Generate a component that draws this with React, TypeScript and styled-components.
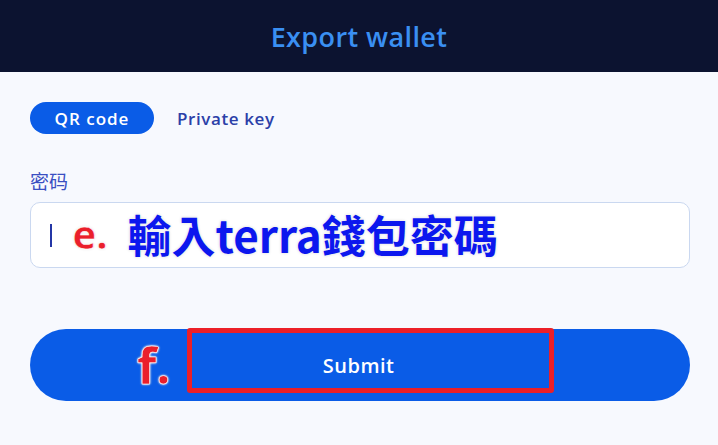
import React from "react";
import styled, { createGlobalStyle } from "styled-components";

const Global = createGlobalStyle`
  html, body { margin: 0; padding: 0; background: #f7f9fe; }
  body { font-family: "Open Sans", "Noto Sans", sans-serif; }
`;

const Page = styled.div`
  width: 718px;
  height: 445px;
  display: flex;
  flex-direction: column;
  background: #f7f9fe;
  overflow: hidden;
`;

const Header = styled.header`
  height: 72px;
  background: #0c1330;
  display: flex;
  align-items: center;
  justify-content: center;
`;

const Title = styled.h1`
  margin: 0;
  font-family: "Open Sans", sans-serif;
  font-weight: 600;
  font-size: 27px;
  color: #3a8ff2;
  letter-spacing: 0.4px;
`;

const Body = styled.main`
  display: flex;
  flex-direction: column;
  padding: 30px 28px 0 30px;
`;

const Tabs = styled.div`
  display: flex;
  align-items: center;
  gap: 23px;
`;

const Tab = styled.button<{ $active?: boolean }>`
  height: 32px;
  width: ${(p) => (p.$active ? "124px" : "auto")};
  padding: 0;
  border: none;
  border-radius: 16px;
  background: ${(p) => (p.$active ? "#0a5ce7" : "transparent")};
  color: ${(p) => (p.$active ? "#ffffff" : "#2b40a8")};
  font-family: "Open Sans", sans-serif;
  font-weight: 600;
  font-size: 17px;
  letter-spacing: ${(p) => (p.$active ? "1px" : "0.6px")};
  cursor: pointer;
`;

const Label = styled.label`
  margin-top: 34px;
  font-family: "Noto Sans CJK SC", sans-serif;
  font-size: 19px;
  color: #3a4fc2;
  line-height: 26px;
`;

const InputBox = styled.div`
  margin-top: 8px;
  height: 64px;
  border: 1px solid #cad8f0;
  border-radius: 10px;
  background: #ffffff;
  display: flex;
  align-items: center;
  padding-left: 19px;
`;

const Caret = styled.span`
  width: 1.5px;
  height: 23px;
  background: #2436a6;
`;

const RedNote = styled.span<{ $size: number }>`
  font-family: "Open Sans", "Liberation Sans", sans-serif;
  font-weight: 700;
  font-size: ${(p) => p.$size}px;
  color: #ea1f2b;
  text-shadow: 0 0 2px #fff, 0 0 2px #fff, 0 0 3px #ddd;
  -webkit-text-stroke: 0.5px #fff;
  line-height: 1;
`;

const BlueNote = styled.span`
  margin-left: 20px;
  font-family: "Noto Sans CJK TC", sans-serif;
  font-weight: 700;
  font-size: 44px;
  color: #0c17ee;
  text-shadow: 0 0 2px #fff, 0 0 3px #ccc;
  line-height: 1;
`;

const InputNote = styled.div`
  display: flex;
  align-items: center;
  margin-left: 21px;
  margin-top: -2px;
`;

const SubmitButton = styled.button`
  margin-top: 61px;
  height: 72px;
  border: none;
  border-radius: 36px;
  background: #0a5ce7;
  display: flex;
  align-items: center;
  padding: 0 0 0 107px;
  cursor: pointer;
`;

const Highlight = styled.span`
  align-self: flex-start;
  margin-left: 16px;
  margin-top: -1px;
  width: 334px;
  height: 45px;
  padding: 10px 23px 0 0;
  border: 5px solid #ec1f28;
  border-radius: 3px;
  display: flex;
  align-items: center;
  justify-content: center;
  color: #ffffff;
  font-family: "Open Sans", sans-serif;
  font-weight: 600;
  font-size: 20px;
  letter-spacing: 0.5px;
  box-sizing: content-box;
`;

export default function App() {
  return (
    <Page>
      <Global />
      <Header>
        <Title>Export wallet</Title>
      </Header>
      <Body>
        <Tabs>
          <Tab $active>QR code</Tab>
          <Tab>Private key</Tab>
        </Tabs>
        <Label>密码</Label>
        <InputBox>
          <Caret />
          <InputNote>
            <RedNote $size={40}>e.</RedNote>
            <BlueNote>輸入terra錢包密碼</BlueNote>
          </InputNote>
        </InputBox>
        <SubmitButton>
          <RedNote $size={50}>f.</RedNote>
          <Highlight>Submit</Highlight>
        </SubmitButton>
      </Body>
    </Page>
  );
}
